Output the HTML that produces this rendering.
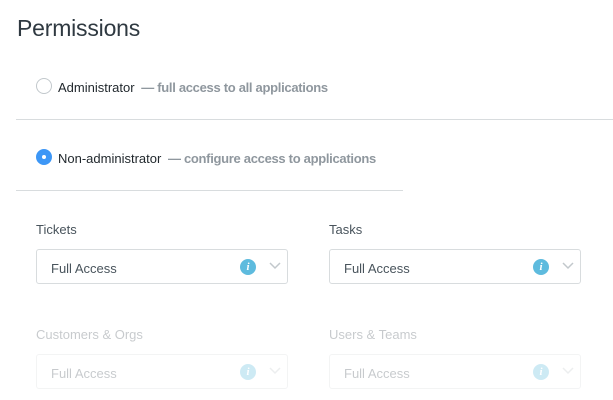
<!DOCTYPE html>
<html><head><style>
body{margin:0;width:613px;height:400px;background:#fff;font-family:"Liberation Sans",sans-serif;position:relative;overflow:hidden;color:#2f3941}
h1{position:absolute;left:17px;top:15px;margin:0;font-weight:normal;font-size:23px;color:#2f3941;letter-spacing:-0.2px}
.radio{position:absolute;width:16px;height:16px;border:1px solid #c2c8cc;border-radius:50%;box-sizing:border-box}
.sel{background:#3d97f6;border-color:#3d97f6}
.sel:after{content:"";position:absolute;left:5px;top:5px;width:4px;height:4px;border-radius:50%;background:#fff}
.lbl{position:absolute;font-size:13px;color:#1f262b}
.lbl span{color:#8f979e;font-weight:bold;margin-left:3px;letter-spacing:-0.3px}
.hr{position:absolute;height:1px;background:#d8dcde}
.fl{position:absolute;font-size:13px;color:#49545c}
.box{position:absolute;width:252px;height:35px;border:1px solid #d8dcde;border-radius:3px;box-sizing:border-box}
.box .t{position:absolute;left:14px;top:11px;font-size:13px;color:#49545c}
.box .i{position:absolute;left:203px;top:9px;width:16px;height:16px;border-radius:50%;background:#5ebbde;color:#fff;font:italic bold 11px "Liberation Serif",serif;text-align:center;line-height:16px}
.box svg{position:absolute;left:232px;top:12px}
.f{opacity:.3}
</style></head><body>
<h1>Permissions</h1>
<div class="radio" style="left:36px;top:78px"></div>
<div class="lbl" style="left:58px;top:80px">Administrator <span>— full access to all applications</span></div>
<div class="hr" style="left:16px;top:119px;width:597px"></div>
<div class="radio sel" style="left:36px;top:149px"></div>
<div class="lbl" style="left:58px;top:151px">Non-administrator <span>— configure access to applications</span></div>
<div class="hr" style="left:16px;top:190px;width:387px"></div>

<div class="fl" style="left:36px;top:222px">Tickets</div>
<div class="box" style="left:36px;top:249px"><div class="t">Full Access</div><div class="i">i</div><svg width="12" height="8"><path d="M1 1l5 5 5-5" stroke="#c2c8cc" stroke-width="1.5" fill="none"/></svg></div>
<div class="fl" style="left:329px;top:222px">Tasks</div>
<div class="box" style="left:329px;top:249px"><div class="t">Full Access</div><div class="i">i</div><svg width="12" height="8"><path d="M1 1l5 5 5-5" stroke="#c2c8cc" stroke-width="1.5" fill="none"/></svg></div>

<div class="f">
<div class="fl" style="left:36px;top:327px">Customers &amp; Orgs</div>
<div class="box" style="left:36px;top:354px"><div class="t">Full Access</div><div class="i">i</div><svg width="12" height="8"><path d="M1 1l5 5 5-5" stroke="#c2c8cc" stroke-width="1.5" fill="none"/></svg></div>
<div class="fl" style="left:329px;top:327px">Users &amp; Teams</div>
<div class="box" style="left:329px;top:354px"><div class="t">Full Access</div><div class="i">i</div><svg width="12" height="8"><path d="M1 1l5 5 5-5" stroke="#c2c8cc" stroke-width="1.5" fill="none"/></svg></div>
</div>
</body></html>
